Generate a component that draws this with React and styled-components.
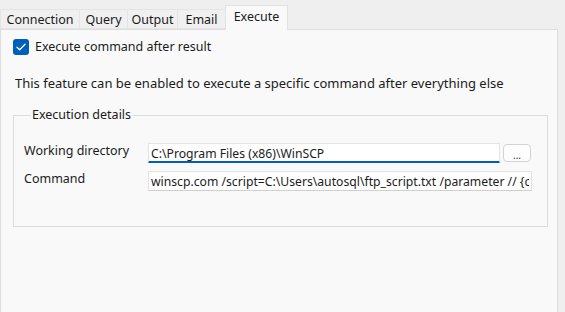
import React, { useState } from 'react';
import styled, { createGlobalStyle } from 'styled-components';

const GlobalStyle = createGlobalStyle`
  html, body {
    margin: 0;
    padding: 0;
    background: #efefef;
  }
  * {
    box-sizing: border-box;
  }
`;

const Window = styled.div`
  width: 565px;
  height: 312px;
  display: flex;
  flex-direction: column;
  background: #efefef;
  font-family: "Noto Sans", "Open Sans", sans-serif;
  font-size: 12.5px;
  color: #1b1b1b;
  overflow: hidden;
`;

const TabStrip = styled.div`
  display: flex;
  align-items: flex-end;
  height: 29px;
  padding-left: 1px;
  position: relative;
  z-index: 1;
`;

const Tab = styled.div`
  height: ${(p) => (p.$active ? '25px' : '20px')};
  width: ${(p) => p.$w}px;
  display: flex;
  align-items: center;
  justify-content: center;
  padding-bottom: ${(p) => (p.$active ? '3px' : '0')};
  background: ${(p) => (p.$active ? '#f9f9f9' : '#f0f0f0')};
  border: 1px solid ${(p) => (p.$active ? '#e2e2e2' : '#e4e4e4')};
  border-bottom: ${(p) => (p.$active ? 'none' : '1px solid #e4e4e4')};
  margin-bottom: ${(p) => (p.$active ? '-1px' : '0')};
  margin-left: -1px;
  cursor: default;
  white-space: nowrap;
`;

const Panel = styled.div`
  flex: 1;
  margin-right: 7px;
  background: #f9f9f9;
  border: 1px solid #dedede;
  border-bottom: none;
  padding: 8px 10px 0 12px;
  display: flex;
  flex-direction: column;
`;

const CheckRow = styled.label`
  display: flex;
  align-items: center;
  gap: 6px;
  height: 17px;
`;

const CheckBox = styled.span`
  width: 16px;
  height: 16px;
  border-radius: 3px;
  background: #005fb8;
  display: flex;
  align-items: center;
  justify-content: center;
`;

const Description = styled.p`
  margin: 20px 0 0 2px;
  font-size: 13px;
  line-height: 16px;
  white-space: nowrap;
`;

const GroupBox = styled.fieldset`
  margin: 17px 0 0 0;
  width: 535px;
  height: 119px;
  border: 1px solid #dcdcdc;
  padding: 21px 14px 0 10px;
  display: grid;
  grid-template-columns: 121px 352px auto;
  grid-auto-rows: 20px;
  row-gap: 8px;
  column-gap: 3px;
  align-content: start;
  align-items: center;

  legend {
    padding: 0 1px;
    margin-left: 7px;
    line-height: 14px;
  }
`;

const FieldLabel = styled.span`
  white-space: nowrap;
  align-self: start;
  line-height: 16px;
`;

const TextBox = styled.input`
  height: 20px;
  width: ${(p) => p.$w}px;
  border: 1px solid #e3e3e3;
  border-bottom: ${(p) => (p.$focused ? '2px solid #005fb8' : '1px solid #cfcfcf')};
  background: #fff;
  font: inherit;
  font-size: 12.2px;
  color: #1b1b1b;
  padding: 1px 2px 0;
  outline: none;
  border-radius: 1px;
`;

const WideBox = styled(TextBox)`
  grid-column: 2 / span 2;
`;

const BrowseButton = styled.button`
  width: 28px;
  height: 18px;
  border: 1px solid #d3d3d3;
  border-radius: 4px;
  background: #fdfdfd;
  font: inherit;
  font-size: 10px;
  line-height: 10px;
  padding: 4px 0 0;
  color: #333;
`;

const tabs = [
  { name: 'Connection', w: 80 },
  { name: 'Query', w: 49 },
  { name: 'Output', w: 51 },
  { name: 'Email', w: 49 },
  { name: 'Execute', w: 63 },
];

export default function App() {
  const [active] = useState('Execute');
  const [workDir, setWorkDir] = useState('C:\\Program Files (x86)\\WinSCP');
  const [command, setCommand] = useState(
    'winscp.com /script=C:\\Users\\autosql\\ftp_script.txt /parameter // {c'
  );

  return (
    <Window>
      <GlobalStyle />
      <TabStrip>
        {tabs.map((t) => (
          <Tab key={t.name} $w={t.w} $active={t.name === active}>
            {t.name}
          </Tab>
        ))}
      </TabStrip>
      <Panel>
        <CheckRow>
          <CheckBox>
            <svg width="10" height="8" viewBox="0 0 10 8" fill="none">
              <path d="M1 4.2 L3.7 6.8 L9 1.2" stroke="#fff" strokeWidth="1.3" strokeLinecap="round" strokeLinejoin="round" />
            </svg>
          </CheckBox>
          Execute command after result
        </CheckRow>
        <Description>
          This feature can be enabled to execute a specific command after everything else
        </Description>
        <GroupBox>
          <legend>Execution details</legend>
          <FieldLabel>Working directory</FieldLabel>
          <TextBox $w={352} $focused value={workDir} onChange={(e) => setWorkDir(e.target.value)} />
          <BrowseButton>...</BrowseButton>
          <FieldLabel>Command</FieldLabel>
          <WideBox $w={384} value={command} onChange={(e) => setCommand(e.target.value)} />
        </GroupBox>
      </Panel>
    </Window>
  );
}
